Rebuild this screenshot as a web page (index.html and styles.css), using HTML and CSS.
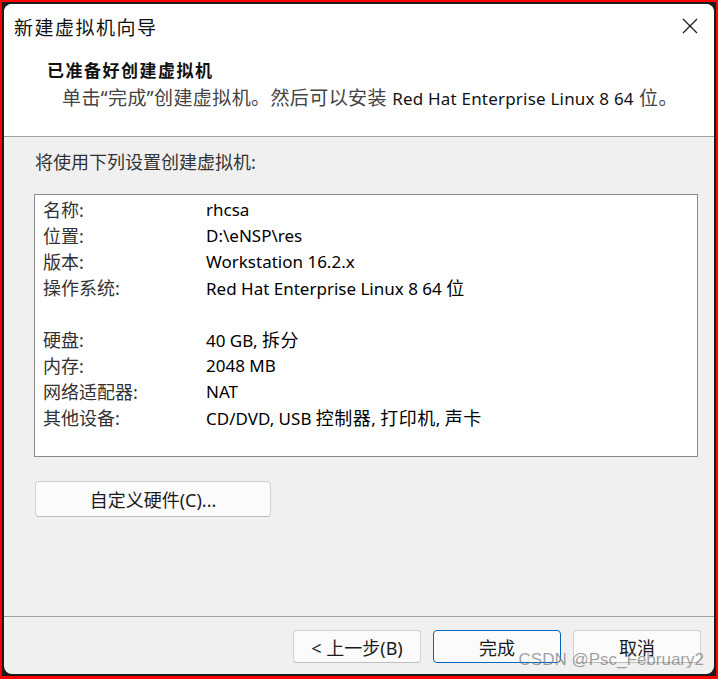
FILE: index.html
```html
<!DOCTYPE html>
<html lang="zh-CN">
<head>
    <meta charset="UTF-8">
    <meta name="viewport" content="width=device-width, initial-scale=1.0">
    <title>新建虚拟机向导</title>
    <link rel="stylesheet" href="styles.css">
</head>
<body>
    <div class="frame">
        <div class="window">
            <header class="wizard-header">
                <div class="title-bar">
                    <span class="title">新建虚拟机向导</span>
                    <button class="close" aria-label="关闭">
                        <svg width="16" height="16" viewBox="0 0 16 16">
                            <path d="M1 1 L15 15 M15 1 L1 15" stroke="#1a1a1a" stroke-width="1.2" fill="none"/>
                        </svg>
                    </button>
                </div>
                <h1 class="heading">已准备好创建虚拟机</h1>
                <p class="subtitle">单击“完成”创建虚拟机。然后可以安装 <span class="os">Red Hat Enterprise Linux 8 64</span> 位。</p>
            </header>

            <main class="wizard-body">
                <p class="intro">将使用下列设置创建虚拟机:</p>
                <div class="summary">
                    <div class="row"><span class="label">名称:</span><span class="value">rhcsa</span></div>
                    <div class="row"><span class="label">位置:</span><span class="value">D:\eNSP\res</span></div>
                    <div class="row"><span class="label">版本:</span><span class="value">Workstation 16.2.x</span></div>
                    <div class="row"><span class="label">操作系统:</span><span class="value">Red Hat Enterprise Linux 8 64 <span class="zh">位</span></span></div>
                    <div class="row"></div>
                    <div class="row"><span class="label">硬盘:</span><span class="value">40 GB, <span class="zh">拆分</span></span></div>
                    <div class="row"><span class="label">内存:</span><span class="value">2048 MB</span></div>
                    <div class="row"><span class="label">网络适配器:</span><span class="value">NAT</span></div>
                    <div class="row"><span class="label">其他设备:</span><span class="value">CD/DVD, USB <span class="zh">控制器</span>, <span class="zh">打印机</span>, <span class="zh">声卡</span></span></div>
                </div>
                <button class="btn btn-wide">自定义硬件(C)...</button>
            </main>

            <footer class="wizard-footer">
                <button class="btn">&lt; 上一步(B)</button>
                <button class="btn btn-primary">完成</button>
                <button class="btn">取消</button>
                <span class="watermark">CSDN @Psc_February2</span>
            </footer>
        </div>
    </div>
</body>
</html>
```

FILE: styles.css
```css
:root {
    --red: #ff0000;
    --frame: #1c1c1c;
    --white: #ffffff;
    --panel: #f0f0f0;
    --line: #a0a0a0;
    --text: #1b1b1b;
    --accent: #0067c0;
}

* {
    margin: 0;
    padding: 0;
    box-sizing: border-box;
}

html, body {
    width: 718px;
    height: 679px;
    overflow: hidden;
}

body {
    background-color: var(--red);
    font-family: "Noto Sans", "Noto Sans CJK SC", sans-serif;
    font-size: 18px;
    color: var(--text);
    padding: 2px 2px 3px 2px;
}

.frame {
    height: 100%;
    background-color: var(--frame);
    padding: 2px;
}

.window {
    position: relative;
    height: 100%;
    border-radius: 8px;
    overflow: hidden;
    background-color: var(--panel);
    display: flex;
    flex-direction: column;
}

/* header */
.wizard-header {
    background-color: var(--white);
    border-bottom: 1px solid var(--line);
    height: 133px;
}

.title-bar {
    height: 44px;
    display: flex;
    align-items: center;
    justify-content: space-between;
    padding: 0 16px 0 10px;
}

.title {
    font-family: "Noto Sans CJK SC", sans-serif;
    font-size: 19px;
    letter-spacing: 1.5px;
    color: #111;
}

.close {
    border: none;
    background: none;
    width: 16px;
    height: 16px;
    display: flex;
}

.heading {
    margin-top: 8px;
    padding-left: 43px;
    font-family: "Noto Sans CJK SC", serif;
    font-size: 17px;
    font-weight: 700;
    letter-spacing: 1.5px;
    line-height: 28px;
    color: #111;
}

.subtitle {
    padding-left: 58px;
    font-size: 19px;
    letter-spacing: 0.4px;
    line-height: 28px;
    color: #444;
}

.subtitle .os {
    font-size: 17px;
    letter-spacing: 0.2px;
    color: #111;
}

/* body */
.wizard-body {
    flex: 1;
    padding: 12px 16px 0 30px;
}

.intro {
    line-height: 26px;
    padding-left: 1px;
    color: #333;
}

.summary {
    margin-top: 19px;
    height: 263px;
    background-color: var(--white);
    border: 1px solid #8a8a8a;
    padding: 1px 8px 2px;
}

.row {
    height: 26px;
    display: flex;
    align-items: center;
}

.label {
    width: 163px;
    color: #333;
}

.value {
    font-size: 17px;
    color: #000;
}

.value .zh {
    font-size: 18px;
    letter-spacing: 0.5px;
}

.btn {
    font-family: "Noto Sans", "Noto Sans CJK SC", sans-serif;
    font-size: 18px;
    color: #1b1b1b;
    background-color: #fbfbfb;
    border: 1px solid #d0d0d0;
    border-bottom-color: #bdbdbd;
    border-radius: 4px;
    width: 128px;
    height: 33px;
}

.btn-wide {
    margin-top: 24px;
    margin-left: 1px;
    width: 236px;
    height: 36px;
}

.btn-primary {
    border: 1px solid var(--accent);
}

/* footer */
.wizard-footer {
    position: relative;
    height: 58px;
    border-top: 1px solid var(--line);
    display: flex;
    justify-content: flex-end;
    gap: 12px;
    padding: 13px 13px 0 0;
}

.watermark {
    position: absolute;
    right: 10px;
    top: 33px;
    font-family: "Liberation Sans", sans-serif;
    font-size: 17px;
    color: rgba(120, 120, 120, 0.7);
    pointer-events: none;
}
```
